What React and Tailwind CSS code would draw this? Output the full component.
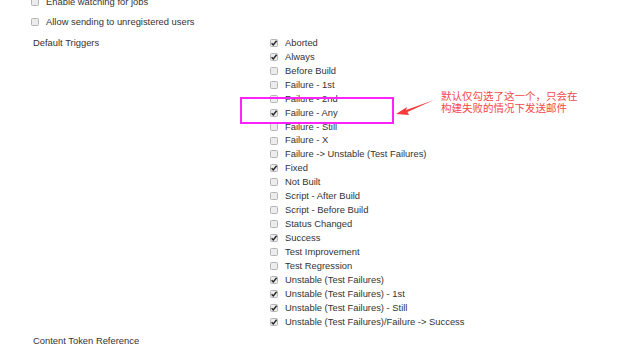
import React from "react";

const triggers = [
  ["Aborted", true],
  ["Always", true],
  ["Before Build", false],
  ["Failure - 1st", false],
  ["Failure - 2nd", false],
  ["Failure - Any", true],
  ["Failure - Still", false],
  ["Failure - X", false],
  ["Failure -> Unstable (Test Failures)", false],
  ["Fixed", true],
  ["Not Built", false],
  ["Script - After Build", false],
  ["Script - Before Build", false],
  ["Status Changed", false],
  ["Success", true],
  ["Test Improvement", false],
  ["Test Regression", false],
  ["Unstable (Test Failures)", true],
  ["Unstable (Test Failures) - 1st", true],
  ["Unstable (Test Failures) - Still", true],
  ["Unstable (Test Failures)/Failure -> Success", true],
];

function Box({ checked }) {
  return (
    <span className="relative inline-block w-[8px] h-[8px] rounded-[1.5px] border border-[#b5b5b5] bg-[#ececec] shrink-0">
      {checked && (
        <svg viewBox="0 0 8 8" className="absolute left-[-1px] top-[-1px] w-[8px] h-[8px]">
          <path d="M1.6 4.2 L3.3 5.9 L6.6 1.8" fill="none" stroke="#222" strokeWidth="1.4" />
        </svg>
      )}
    </span>
  );
}

export default function App() {
  return (
    <div className="relative w-[624px] h-[345px] overflow-hidden bg-white text-[#333] text-[9.4px]" style={{ fontFamily: '"Liberation Sans", Arial, sans-serif' }}>
      <div className="mt-[-5px] flex flex-col">
        <div className="flex items-center h-[14px] pl-[31px] gap-[7px]">
          <Box />
          <span>Enable watching for jobs</span>
        </div>
        <div className="flex items-center h-[14px] mt-[6px] pl-[31px] gap-[7px]">
          <Box />
          <span>Allow sending to unregistered users</span>
        </div>
        <div className="flex mt-[7px]">
          <div className="w-[270px] pl-[33px] leading-[14px] h-[14px]">Default Triggers</div>
          <div className="flex flex-col">
            {triggers.map(([label, checked]) => (
              <div key={label} className="flex items-center h-[13.95px] gap-[7px]">
                <Box checked={checked} />
                <span>{label}</span>
              </div>
            ))}
          </div>
        </div>
        <div className="pl-[33px] mt-[5px] leading-[14px]">Content Token Reference</div>
      </div>

      <div className="absolute left-[240px] top-[97px] w-[154px] h-[27px] border-2 border-[#ff22ff]" />
      <svg className="absolute left-[394px] top-[96px]" width="44" height="24" viewBox="0 0 44 24">
        <path d="M40 4 L12 14 L13 11 L2 18 L15 19 L13.5 16 Z" fill="#f53b3b" />
      </svg>
      <div className="absolute left-[441px] top-[90px] text-[10.5px] leading-[12px] text-[#f54848]" style={{ fontFamily: '"Noto Sans CJK SC", sans-serif' }}>
        <div>默认仅勾选了这一个，只会在</div>
        <div>构建失败的情况下发送邮件</div>
      </div>
    </div>
  );
}
